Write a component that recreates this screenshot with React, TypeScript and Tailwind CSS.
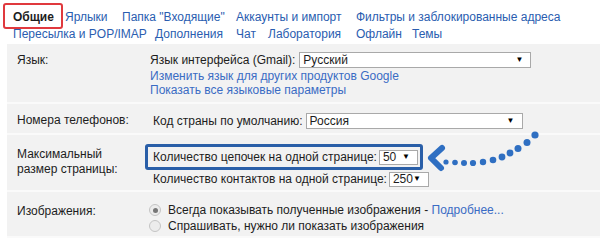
const tabs1 = [
    ['Ярлыки', 'w-[57px]'],
    ['Папка "Входящие"', 'w-[114px]'],
    ['Аккаунты и импорт', 'w-[120px]'],
    ['Фильтры и заблокированные адреса', ''],
];
const tabs2 = [
    ['Пересылка и POP/IMAP', 'w-[142px]'],
    ['Дополнения', 'w-[81px]'],
    ['Чат', 'w-[32px]'],
    ['Лаборатория', 'w-[88px]'],
    ['Офлайн', 'w-[56px]'],
    ['Темы', ''],
];

function Select({value, className}: {value: string; className: string}) {
    return (
        <div className={`flex items-center justify-between border border-[#a9a9a9] bg-white pl-[3px] pr-[7px] text-[12px] leading-[12px] text-[#1d1d1d] ${className}`}>
            <span>{value}</span>
            <span className="text-[8px] leading-none text-black">▼</span>
        </div>
    );
}

function Radio({checked}: {checked?: boolean}) {
    return (
        <span className="flex h-[12px] w-[12px] shrink-0 items-center justify-center rounded-full border border-[#c4c4c4] bg-[#ececec]">
            {checked && <span className="h-[5px] w-[5px] rounded-full bg-[#777]" />}
        </span>
    );
}

export default function App() {
    const dots = [
        [446, 162, 2.6], [455, 162.5, 2.8], [464, 163, 3], [473, 163, 3.1], [483, 162, 3.2],
        [493, 160, 3.3], [502, 157, 3.4], [510, 153, 3.4], [518, 148.5, 3.5], [527, 142.5, 3.5], [535, 135, 3.6],
    ];
    return (
        <div className="relative h-[241px] w-[600px] overflow-hidden whitespace-nowrap bg-white font-['Liberation_Sans',Arial,sans-serif] text-[12px] text-[#1d1d1d]">
            <div className="flex flex-col gap-px pl-[13px] pt-[9px] leading-[16px]">
                <div className="flex">
                    <span className="relative w-[52px] font-bold">
                        Общие
                        <span className="absolute -left-[10px] -top-[6px] h-[26px] w-[60px] rounded-[3px] border-2 border-[#e0393e]" />
                    </span>
                    {tabs1.map(([t, w]) => (
                        <span key={t} className={`text-[#2a5db0] ${w}`}>{t}</span>
                    ))}
                </div>
                <div className="flex">
                    {tabs2.map(([t, w]) => (
                        <span key={t} className={`text-[#2a5db0] ${w}`}>{t}</span>
                    ))}
                </div>
            </div>

            <div className="ml-[7px] mt-[2px] bg-[#f2f2f2]">
                <div className="flex h-[60px] border-b-2 border-[#fafafa]">
                    <div className="w-[143px] pl-[10px] pt-[7px]">Язык:</div>
                    <div className="flex flex-col pt-[8px] leading-[14px]">
                        <div className="flex items-center">
                            <span className="mr-[4px]">Язык интерфейса (Gmail):</span>
                            <Select value="Русский" className="h-[16px] w-[232px]" />
                        </div>
                        <span className="mt-[1px] text-[#3a6cc4]">Изменить язык для других продуктов Google</span>
                        <span className="text-[#3a6cc4]">Показать все языковые параметры</span>
                    </div>
                </div>
                <div className="flex h-[31px] border-b-2 border-[#fafafa]">
                    <div className="w-[146px] pl-[10px] pt-[7px]">Номера телефонов:</div>
                    <div className="flex items-center self-start pt-[8px]">
                        <span className="mr-[3px]">Код страны по умолчанию:</span>
                        <Select value="Россия" className="h-[16px] w-[217px]" />
                    </div>
                </div>
                <div className="flex h-[57px] border-b-2 border-[#fafafa]">
                    <div className="w-[146px] pl-[10px] pt-[12px] leading-[15px]">Максимальный<br />размер страницы:</div>
                    <div className="flex flex-col pt-[9px]">
                        <div className="-ml-[8px] flex h-[26px] w-[278px] items-center rounded-[3px] border-[3px] border-[#2a5fa8] pl-[5px]">
                            <span className="mr-[2px]">Количество цепочек на одной странице:</span>
                            <Select value="50" className="h-[15px] w-[39px]" />
                        </div>
                        <div className="flex items-center">
                            <span className="mr-[2px]">Количество контактов на одной странице:</span>
                            <Select value="250" className="h-[15px] w-[40px]" />
                        </div>
                    </div>
                </div>
                <div className="flex h-[46px] border-b-2 border-[#fafafa]">
                    <div className="w-[142px] pl-[10px] pt-[10px]">Изображения:</div>
                    <div className="flex flex-col pt-[10px] leading-[16px]">
                        <div className="flex items-center gap-[7px]">
                            <Radio checked />
                            <span>Всегда показывать полученные изображения - <span className="text-[#3a6cc4]">Подробнее...</span></span>
                        </div>
                        <div className="flex items-center gap-[7px]">
                            <Radio />
                            <span>Спрашивать, нужно ли показать изображения</span>
                        </div>
                    </div>
                </div>
            </div>

            <svg className="absolute left-0 top-0" width="600" height="241" viewBox="0 0 600 241">
                <polyline points="442,148 431,158 441,168" fill="none" stroke="#2f6fc2" strokeWidth="6" strokeLinecap="round" strokeLinejoin="round" />
                {dots.map(([x, y, r], i) => (
                    <circle key={i} cx={x} cy={y} r={r} fill="#2f6fc2" />
                ))}
            </svg>
        </div>
    );
}
